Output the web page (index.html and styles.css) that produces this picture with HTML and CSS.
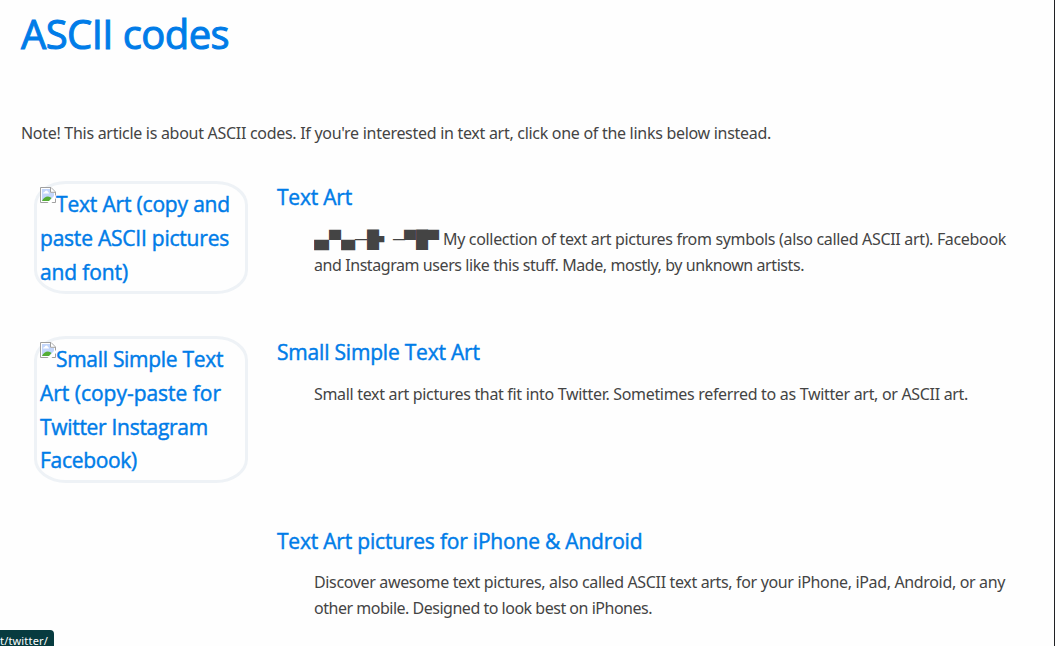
FILE: index.html
```html
<!DOCTYPE html>
<html lang="en">
<head><meta charset="utf-8"><title>ASCII codes</title><link rel="stylesheet" href="styles.css"></head>
<body>
<svg width="0" height="0" class="defs"><symbol id="broken" viewBox="0 0 16 16">
<path d="M.5.5H11L15.5 5V15.5H.5Z" fill="#fff" stroke="#a0a0a0"/>
<path d="M2 2H10.5V6H14V9L9 14H2Z" fill="#c3d6fb"/>
<path d="M3 6.5Q3 5 4.5 5Q5 3.5 6.3 3.5Q8 3.5 8 5.2Q9.3 5.2 9 6.5Z" fill="#fff"/>
<path d="M2 14Q4 9.5 8 9.5Q10 9.5 11.5 11L9 14Z" fill="#54ae35"/>
<path d="M10.5.8V5.3H15" fill="#fff" stroke="#a0a0a0"/>
<path d="M16 8V11L11.5 16H7.5Z" fill="#fff"/>
</symbol></svg>
<main class="page">
<h1>ASCII codes</h1>
<p class="note">Note! This article is about ASCII codes. If you're interested in text art, click one of the links below instead.</p>
<section class="item first">
  <a class="thumb"><svg class="broken"><use href="#broken"/></svg><span class="t1">Text Art (copy and</span><br><span class="t2">paste ASCII pictures</span><br><span class="t3">and font)</span></a>
  <div class="info"><h2>Text Art</h2>
  <p><span class="art"><i class="w15">▄</i><i class="w12">▀</i><i class="w14">▄</i><i class="w12">─</i><i class="w11">█</i><i class="dot">▪</i><i class="w11">─</i><i class="w12">▀</i><i class="w11">█</i><i class="w11">▀</i></span><span class="l1">My collection of text art pictures from symbols (also called ASCII art). Facebook</span><br><span class="l2">and Instagram users like this stuff. Made, mostly, by unknown artists.</span></p></div>
</section>
<section class="item second">
  <a class="thumb"><svg class="broken"><use href="#broken"/></svg><span class="t4">Small Simple Text</span><br><span class="t5">Art (copy-paste for</span><br><span class="t4">Twitter Instagram</span><br><span class="t4">Facebook)</span></a>
  <div class="info"><h2>Small Simple Text Art</h2>
  <p><span class="l3">Small text art pictures that fit into Twitter. Sometimes referred to as Twitter art, or ASCII art.</span></p></div>
</section>
<section class="item third">
  <div class="info"><h2>Text Art pictures for iPhone &amp; Android</h2>
  <p><span class="l4">Discover awesome text pictures, also called ASCII text arts, for your iPhone, iPad, Android, or any</span><br><span class="l5">other mobile. Designed to look best on iPhones.</span></p></div>
</section>
</main>
<div class="status">t/twitter/</div>
</body>
</html>
```
FILE: styles.css
```css
*{box-sizing:border-box}
body{margin:0;background:#fefefe;color:#444;font:16px/26px "Noto Sans",sans-serif;overflow:hidden}
.defs{position:absolute}
.page{height:646px;padding:4px 0 0 21px;border-right:1px solid #202124;overflow:hidden;white-space:nowrap}
h1,h2{margin:0;font-family:"Open Sans",sans-serif;font-weight:500;color:#007ce8}
h1{font-size:40px;line-height:60px;letter-spacing:-.58px;-webkit-text-stroke:1px #007ce8}
h2{font-size:21px;line-height:32px;letter-spacing:-.2px;-webkit-text-stroke:.45px #007ce8}
.note{margin:56px 0 0;letter-spacing:-.289px}
.item{display:grid;grid-template-columns:214px 1fr;column-gap:29px;padding-left:13px;align-items:start}
.first{margin-top:35px;height:155px}
.second{height:189px}
.thumb{border:3px solid #eef2f6;border-radius:32px / 24px;padding:4px 3px 3px;font:500 21px/33.8px "Open Sans",sans-serif;color:#007ce8;-webkit-text-stroke:.45px #007ce8}
.first .thumb{height:113px}
.second .thumb{height:147px}
.broken{width:16px;height:16px;vertical-align:9px;margin-top:-9px;-webkit-text-stroke:0}
.info{grid-column:2}
.info p{margin:13px 0 0 37px}
.third .info p{margin-top:12px}
.t1{letter-spacing:-.178px}
.t2{letter-spacing:-.221px}
.t3{letter-spacing:-.123px}
.t4{letter-spacing:-.3px}
.t5{letter-spacing:-.018px}
.l1{letter-spacing:-.329px}
.l2{letter-spacing:-.425px}
.l3{letter-spacing:-.317px}
.l4{letter-spacing:-.345px}
.l5{letter-spacing:-.486px}
.art{display:inline-flex;width:129px;height:26px;vertical-align:top;font-size:17px}
.art i{font-style:normal;transform-origin:0 50%}
.w11{width:11px}
.w12{width:12px}
.w14{width:14px;transform:scaleX(1.18)}
.w15{width:15px;transform:scaleX(1.25)}
.dot{width:15px;font-size:25px;line-height:22px;margin-left:-1px;margin-right:1px}
.status{position:absolute;left:0;bottom:0;width:54px;height:16px;background:#073b3f;color:#fff;border-radius:0 4px 0 0;font:11px/22px "Noto Sans",sans-serif;letter-spacing:.17px}
```
